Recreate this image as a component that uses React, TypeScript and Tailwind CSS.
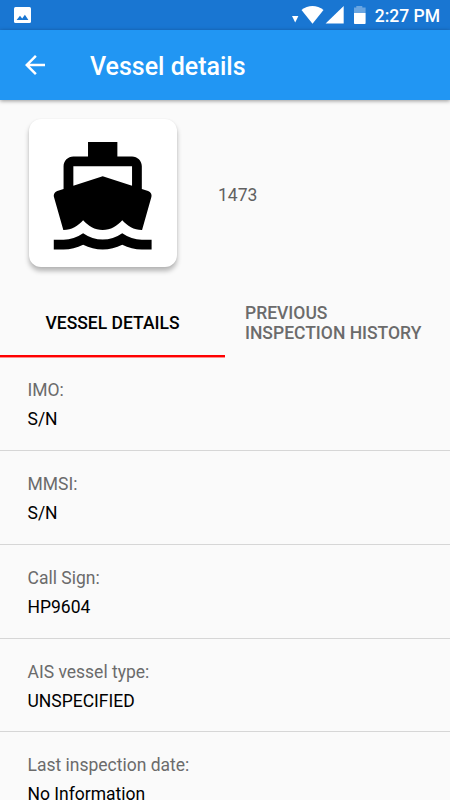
import React from 'react';

type Detail = {
  label: string;
  value: string;
};

const details: Detail[] = [
  { label: 'IMO:', value: 'S/N' },
  { label: 'MMSI:', value: 'S/N' },
  { label: 'Call Sign:', value: 'HP9604' },
  { label: 'AIS vessel type:', value: 'UNSPECIFIED' },
  { label: 'Last inspection date:', value: 'No Information' },
];

const StatusBar: React.FC = () => (
  <div className="flex h-[30px] shrink-0 items-center justify-between bg-[#1976d2] pl-[14px] pr-[10px] text-white">
    <svg width="17" height="16" viewBox="0 0 17 16">
      <rect width="17" height="16" rx="1.5" fill="#fff" />
      <path d="M2.6 13 6 8.8l2.2 2.6 2.7-3.6 3.5 5.2z" fill="#1976d2" />
    </svg>
    <div className="flex items-center">
      <svg width="74" height="20" viewBox="292 5 74 20" fill="#fff">
        <path d="M292 16h6.4l-3.2 6.4z" />
        <path d="M301.5 10c6.5-5.4 15.5-5.4 22 0l-11 13.7z" />
        <path d="M343.7 6v17.5h-18.1z" />
        <path d="M354 7.5h2.3V6h6v1.5h3.3V13H354z" opacity=".35" />
        <path d="M354 13h11.6v10.2c0 .5-.3.8-.8.8h-10c-.5 0-.8-.3-.8-.8z" />
      </svg>
      <span className="ml-[9px] pt-[2px] text-[17.5px] leading-5 font-medium">2:27 PM</span>
    </div>
  </div>
);

const AppBar: React.FC = () => (
  <header className="relative flex h-[70px] shrink-0 items-center bg-[#2196f3] pl-5 text-white shadow-[0_1px_4px_rgba(0,0,0,0.4)]">
    <svg width="30" height="30" viewBox="0 0 24 24" fill="currentColor">
      <path d="M20 11H7.83l5.59-5.59L12 4l-8 8 8 8 1.41-1.41L7.83 13H20v-2z" />
    </svg>
    <h1 className="ml-10 pt-[4px] text-[25px] leading-[30px] font-medium">Vessel details</h1>
  </header>
);

const VesselCard: React.FC = () => (
  <div className="flex h-[148px] w-[148px] items-center justify-center rounded-[12px] bg-white shadow-[0_4px_5px_rgba(0,0,0,0.28),0_0_2px_rgba(0,0,0,0.06)]">
    <svg width="117.4" height="117.4" viewBox="0 0 24 24" className="mt-[5px]">
      <path d="M20 21c-1.39 0-2.78-.47-4-1.32-2.44 1.71-5.56 1.71-8 0C6.78 20.53 5.39 21 4 21H2v2h2c1.38 0 2.74-.35 4-.99 2.52 1.29 5.48 1.29 8 0 1.26.65 2.62.99 4 .99h2v-2h-2zM3.95 19H4c1.6 0 3.02-.88 4-2 .98 1.12 2.4 2 4 2s3.02-.88 4-2c.98 1.12 2.4 2 4 2h.05l1.89-6.68c.08-.26.06-.54-.06-.78s-.34-.42-.6-.5L20 10.62V6c0-1.1-.9-2-2-2h-3V1H9v3H6c-1.1 0-2 .9-2 2v4.62l-1.29.42c-.26.08-.48.26-.6.5s-.15.52-.06.78L3.95 19zM6 6h12v3.97L12 8 6 9.97V6z" />
    </svg>
  </div>
);

const Tabs: React.FC = () => (
  <div className="grid h-[60px] shrink-0 grid-cols-2 text-[17.5px] leading-[20px] font-medium">
    <div className="flex items-center justify-center border-b-2 border-[#ff0000] pb-[6px] text-black shadow-[0_1px_0_#fd8d8d]">
      VESSEL DETAILS
    </div>
    <div className="flex items-center pb-[9px] pl-5 text-[#6b6b6b]">
      <span>
        PREVIOUS
        <br />
        INSPECTION HISTORY
      </span>
    </div>
  </div>
);

const App: React.FC = () => {
  return (
    <div
      className="flex h-[800px] w-[450px] flex-col overflow-hidden bg-[#fafafa]"
      style={{ fontFamily: 'Roboto, sans-serif' }}
    >
      <StatusBar />
      <AppBar />

      {/* vessel icon and number */}
      <div className="flex h-[197px] shrink-0 items-start pt-[19px] pl-[29px]">
        <VesselCard />
        <span className="ml-[41px] flex h-[152px] items-center text-[17.5px] text-[#606060]">1473</span>
      </div>

      <Tabs />

      <div className="flex flex-col pt-[0.25px]">
        {details.map((item) => (
          <div key={item.label} className="h-[93.75px] shrink-0 border-b border-[#d6d6d6] pt-[23px] pl-[27.5px] text-[17.5px] leading-[20.5px]">
            <p className="text-[#6b6b6b]">{item.label}</p>
            <p className="mt-[8.5px] text-black">{item.value}</p>
          </div>
        ))}
      </div>
    </div>
  );
};

export default App;
